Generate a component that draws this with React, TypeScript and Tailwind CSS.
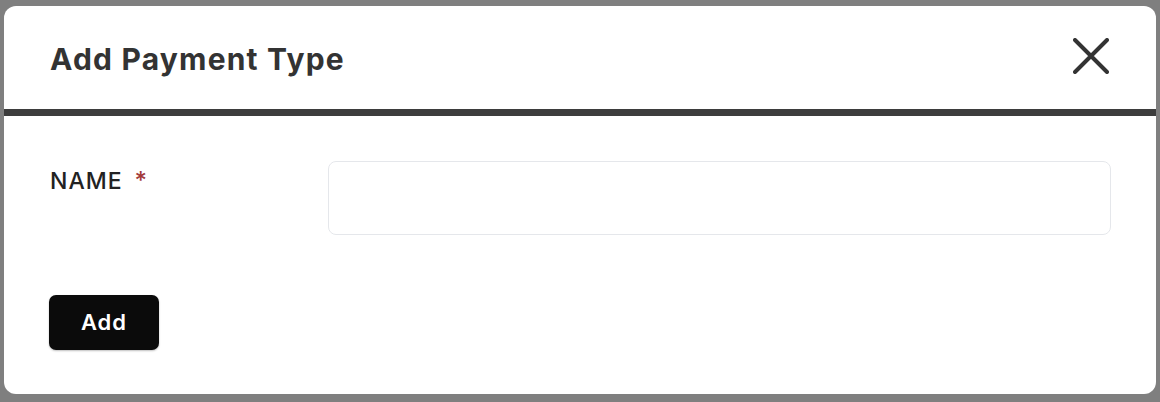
import React from "react";

export default function App() {
  return (
    <div
      className="w-[1160px] h-[402px] bg-[#7f7f7f] pt-[6px] pl-[4px] pr-[4px] pb-[8px]"
      style={{ fontFamily: "Inter, 'Liberation Sans', sans-serif" }}
    >
      <div className="h-full bg-white rounded-[12px] flex flex-col overflow-hidden">
        <div className="h-[103px] flex items-center justify-between pl-[46px] pr-[47px] shrink-0">
          <h2 className="text-[30px] font-bold text-[#333333] tracking-[1.2px] pt-[4px]">Add Payment Type</h2>
          <button className="w-[36px] h-[36px] flex items-center justify-center mb-[3px]">
            <svg width="36" height="36" viewBox="0 0 36 36" fill="none">
              <path d="M2 2L34 34M34 2L2 34" stroke="#333333" strokeWidth="4" strokeLinecap="round" />
            </svg>
          </button>
        </div>
        <div className="h-[7px] bg-[#3d3d3d] shrink-0" />
        <div className="pl-[46px] pr-[45px] pt-[45px]">
          <div className="flex items-start">
            <label className="w-[278px] shrink-0 pt-[2px] text-[23px] font-medium text-[#222222] tracking-[1px] flex items-center">
              NAME<span className="ml-[12px] text-[#a33a3a] text-[24px]">*</span>
            </label>
            <input className="flex-1 h-[74px] border border-[#e5e7eb] rounded-[8px] outline-none px-4" />
          </div>
          <button className="mt-[60px] -ml-[1px] w-[110px] h-[55px] bg-[#0b0b0b] text-white text-[22px] font-semibold tracking-[1px] rounded-[7px] shadow-[0_1px_2px_rgba(0,0,0,0.25)]">
            Add
          </button>
        </div>
      </div>
    </div>
  );
}
